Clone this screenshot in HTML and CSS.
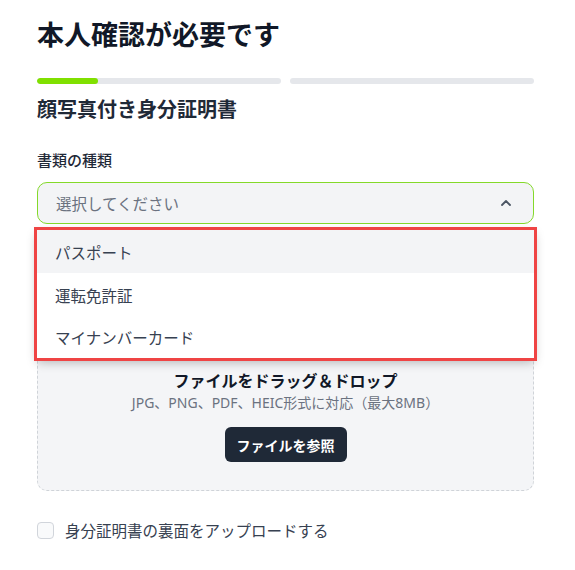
FILE: index.html
```html
<!DOCTYPE html>
<html lang="ja">
<head>
<meta charset="utf-8">
<link rel="stylesheet" href="styles.css">
</head>
<body>
<div class="page">
  <h1 class="title">本人確認が必要です</h1>
  <div class="progress">
    <div class="track"><div class="fill"></div></div>
    <div class="track"></div>
  </div>
  <h2 class="subtitle">顔写真付き身分証明書</h2>
  <div class="field-label">書類の種類</div>
  <div class="select-wrap">
    <div class="select">
      <span class="placeholder">選択してください</span>
      <svg class="chevron" width="14" height="14" viewBox="0 0 14 14"><path d="M3 9 L7 5 L11 9" fill="none" stroke="#4b5563" stroke-width="1.8" stroke-linecap="round" stroke-linejoin="round"/></svg>
    </div>
    <ul class="menu">
      <li class="item active">パスポート</li>
      <li class="item">運転免許証</li>
      <li class="item">マイナンバーカード</li>
    </ul>
  </div>
  <div class="upload">
    <div class="upload-icon"></div>
    <div class="upload-title">ファイルをドラッグ＆ドロップ</div>
    <div class="upload-hint">JPG、PNG、PDF、HEIC形式に対応（最大8MB）</div>
    <button class="browse">ファイルを参照</button>
  </div>
  <label class="check-row">
    <span class="checkbox"></span>
    <span class="check-label">身分証明書の裏面をアップロードする</span>
  </label>
</div>
</body>
</html>
```

FILE: styles.css
```css
* { box-sizing: border-box; }
html, body { margin: 0; padding: 0; background: #ffffff; }
body {
  font-family: "Noto Sans", "Noto Sans CJK JP", sans-serif;
  color: #1f2937;
}
.page {
  width: 497px;
  margin-left: 37px;
  padding-top: 18px;
}
.title {
  margin: 0;
  font-size: 27px;
  line-height: 34px;
  font-weight: 700;
  color: #111827;
}
.progress {
  display: flex;
  gap: 9px;
  margin-top: 26px;
}
.track {
  flex: 1;
  height: 6px;
  border-radius: 3px;
  background: #e5e7eb;
  overflow: hidden;
}
.fill {
  width: 25%;
  height: 100%;
  background: #80e000;
  border-radius: 3px;
}
.subtitle {
  margin: 12px 0 0;
  font-size: 20px;
  line-height: 28px;
  font-weight: 700;
  color: #1f2937;
}
.field-label {
  margin-top: 25px;
  font-size: 15px;
  line-height: 22px;
  font-weight: 500;
  color: #1f2937;
}
.select-wrap {
  position: relative;
  margin-top: 11px;
}
.select {
  height: 42px;
  border: 1.5px solid #84d92a;
  border-radius: 10px;
  background: #f3f4f6;
  display: flex;
  align-items: center;
  justify-content: space-between;
  padding: 0 20px 0 18px;
}
.placeholder {
  font-size: 15.5px;
  color: #6b7280;
}
.chevron { display: block; }
.menu {
  position: absolute;
  top: 48px;
  left: 0;
  right: 0;
  margin: 0;
  padding: 0;
  list-style: none;
  background: #ffffff;
  outline: 3px solid #ef4444;
  box-shadow: 0 4px 10px rgba(0, 0, 0, 0.28);
  z-index: 2;
}
.item {
  height: 42.7px;
  display: flex;
  align-items: center;
  padding: 2px 18px 0;
  font-size: 15.5px;
  color: #374151;
}
.item.active { background: #f3f4f6; }
.upload {
  margin-top: 20px;
  border: 1px dashed #cfd3d8;
  border-radius: 10px;
  background: #f4f5f7;
  padding: 40px 24px 28px;
  display: flex;
  flex-direction: column;
  align-items: center;
}
.upload-icon {
  width: 56px;
  height: 56px;
  border-radius: 50%;
  background: #e5e7eb;
  margin-bottom: 29px;
}
.upload-title {
  font-size: 16px;
  line-height: 22px;
  font-weight: 700;
  color: #111827;
}
.upload-hint {
  font-size: 14px;
  line-height: 21px;
  color: #6b7280;
}
.browse {
  margin-top: 14px;
  height: 35px;
  padding: 0 12px;
  border: none;
  border-radius: 6px;
  background: #1f2937;
  color: #ffffff;
  font-family: inherit;
  font-size: 14px;
  font-weight: 700;
}
.check-row {
  display: flex;
  align-items: center;
  gap: 11px;
  margin-top: 28px;
}
.checkbox {
  width: 17px;
  height: 17px;
  border: 1px solid #d1d5db;
  border-radius: 4px;
  background: #f9fafb;
}
.check-label {
  font-size: 15.5px;
  color: #374151;
}
```
